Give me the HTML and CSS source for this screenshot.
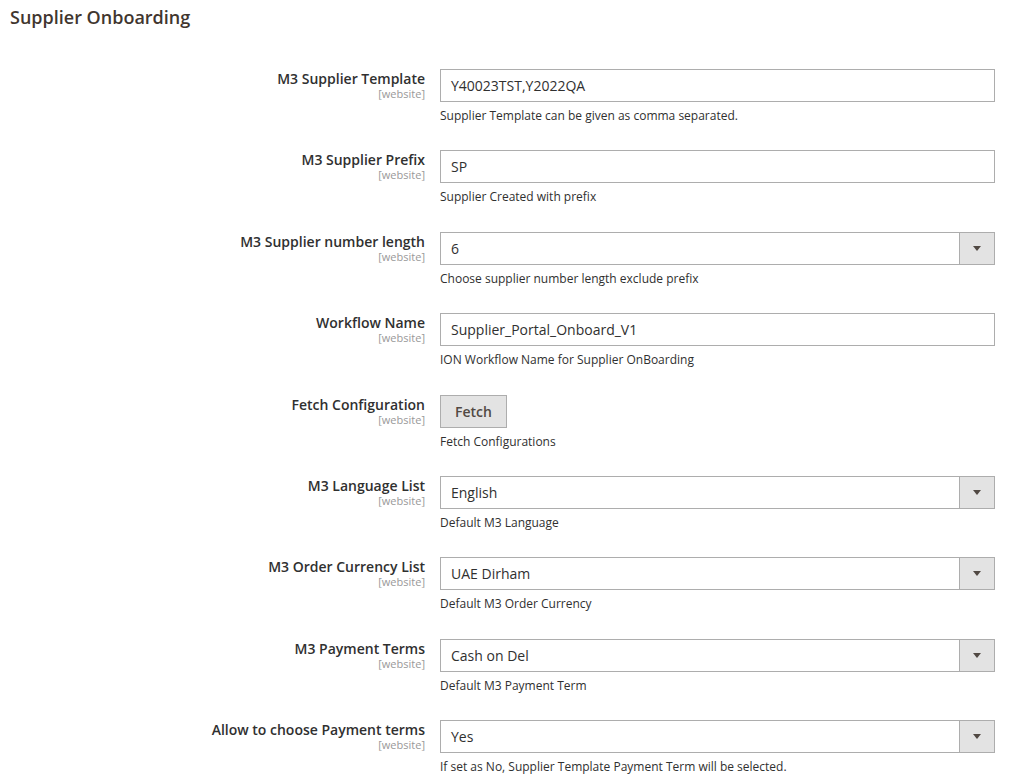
FILE: index.html
```html
<!DOCTYPE html>
<html>
<head>
<meta charset="utf-8">
<link rel="stylesheet" href="styles.css">
</head>
<body>
<div class="page">
  <h1 class="section-title">Supplier Onboarding</h1>
  <div class="form">
    <div class="row">
      <div class="label-col"><div class="label">M3 Supplier Template</div><div class="scope">[website]</div></div>
      <div class="control-col"><div class="input">Y40023TST,Y2022QA</div><div class="note">Supplier Template can be given as comma separated.</div></div>
    </div>
    <div class="row">
      <div class="label-col"><div class="label">M3 Supplier Prefix</div><div class="scope">[website]</div></div>
      <div class="control-col"><div class="input">SP</div><div class="note">Supplier Created with prefix</div></div>
    </div>
    <div class="row">
      <div class="label-col"><div class="label">M3 Supplier number length</div><div class="scope">[website]</div></div>
      <div class="control-col"><div class="input select"><span class="value">6</span><span class="arrow-box"><span class="arrow"></span></span></div><div class="note">Choose supplier number length exclude prefix</div></div>
    </div>
    <div class="row">
      <div class="label-col"><div class="label">Workflow Name</div><div class="scope">[website]</div></div>
      <div class="control-col"><div class="input">Supplier_Portal_Onboard_V1</div><div class="note">ION Workflow Name for Supplier OnBoarding</div></div>
    </div>
    <div class="row">
      <div class="label-col"><div class="label">Fetch Configuration</div><div class="scope">[website]</div></div>
      <div class="control-col"><div class="button">Fetch</div><div class="note">Fetch Configurations</div></div>
    </div>
    <div class="row">
      <div class="label-col"><div class="label">M3 Language List</div><div class="scope">[website]</div></div>
      <div class="control-col"><div class="input select"><span class="value">English</span><span class="arrow-box"><span class="arrow"></span></span></div><div class="note">Default M3 Language</div></div>
    </div>
    <div class="row">
      <div class="label-col"><div class="label">M3 Order Currency List</div><div class="scope">[website]</div></div>
      <div class="control-col"><div class="input select"><span class="value">UAE Dirham</span><span class="arrow-box"><span class="arrow"></span></span></div><div class="note">Default M3 Order Currency</div></div>
    </div>
    <div class="row">
      <div class="label-col"><div class="label">M3 Payment Terms</div><div class="scope">[website]</div></div>
      <div class="control-col"><div class="input select"><span class="value">Cash on Del</span><span class="arrow-box"><span class="arrow"></span></span></div><div class="note">Default M3 Payment Term</div></div>
    </div>
    <div class="row">
      <div class="label-col"><div class="label">Allow to choose Payment terms</div><div class="scope">[website]</div></div>
      <div class="control-col"><div class="input select"><span class="value">Yes</span><span class="arrow-box"><span class="arrow"></span></span></div><div class="note">If set as No, Supplier Template Payment Term will be selected.</div></div>
    </div>
  </div>
</div>
</body>
</html>
```

FILE: styles.css
```css
html, body {
  margin: 0;
  padding: 0;
  background: #ffffff;
}
body {
  font-family: "Open Sans", "Liberation Sans", sans-serif;
  color: #303030;
  overflow: hidden;
}
.page {
  padding: 5px 0 0 10px;
  width: 1010px;
}
.section-title {
  margin: 0;
  font-size: 18px;
  line-height: 24px;
  font-weight: 600;
  color: #41362f;
}
.form {
  margin-top: 40px;
}
.row {
  display: grid;
  grid-template-columns: 415px 555px;
  column-gap: 15px;
  height: 81.375px;
}
.label-col {
  text-align: right;
  padding-top: 1px;
}
.label {
  font-size: 14px;
  line-height: 18px;
  font-weight: 600;
  color: #303030;
}
.scope {
  font-size: 11px;
  line-height: 11px;
  color: #999999;
}
.input {
  box-sizing: border-box;
  height: 33px;
  border: 1px solid #adadad;
  background: #ffffff;
  font-size: 14px;
  line-height: 31px;
  padding-left: 10px;
  color: #303030;
}
.select {
  display: flex;
  padding-left: 0;
}
.select .value {
  flex: 1;
  padding-left: 10px;
}
.arrow-box {
  width: 34px;
  background: #e3e3e3;
  border-left: 1px solid #adadad;
  display: flex;
  align-items: center;
  justify-content: center;
}
.arrow {
  width: 0;
  height: 0;
  border-left: 4px solid transparent;
  border-right: 4px solid transparent;
  border-top: 5px solid #514943;
}
.button {
  box-sizing: border-box;
  display: inline-block;
  height: 33px;
  width: 67px;
  border: 1px solid #adadad;
  background: #e3e3e3;
  font-size: 14px;
  line-height: 31px;
  font-weight: 600;
  text-align: center;
  color: #514943;
}
.control-col {
  display: flex;
  flex-direction: column;
  align-items: stretch;
}
.control-col .button {
  align-self: flex-start;
}
.note {
  margin-top: 6px;
  font-size: 12px;
  line-height: 16px;
  color: #303030;
}
```
